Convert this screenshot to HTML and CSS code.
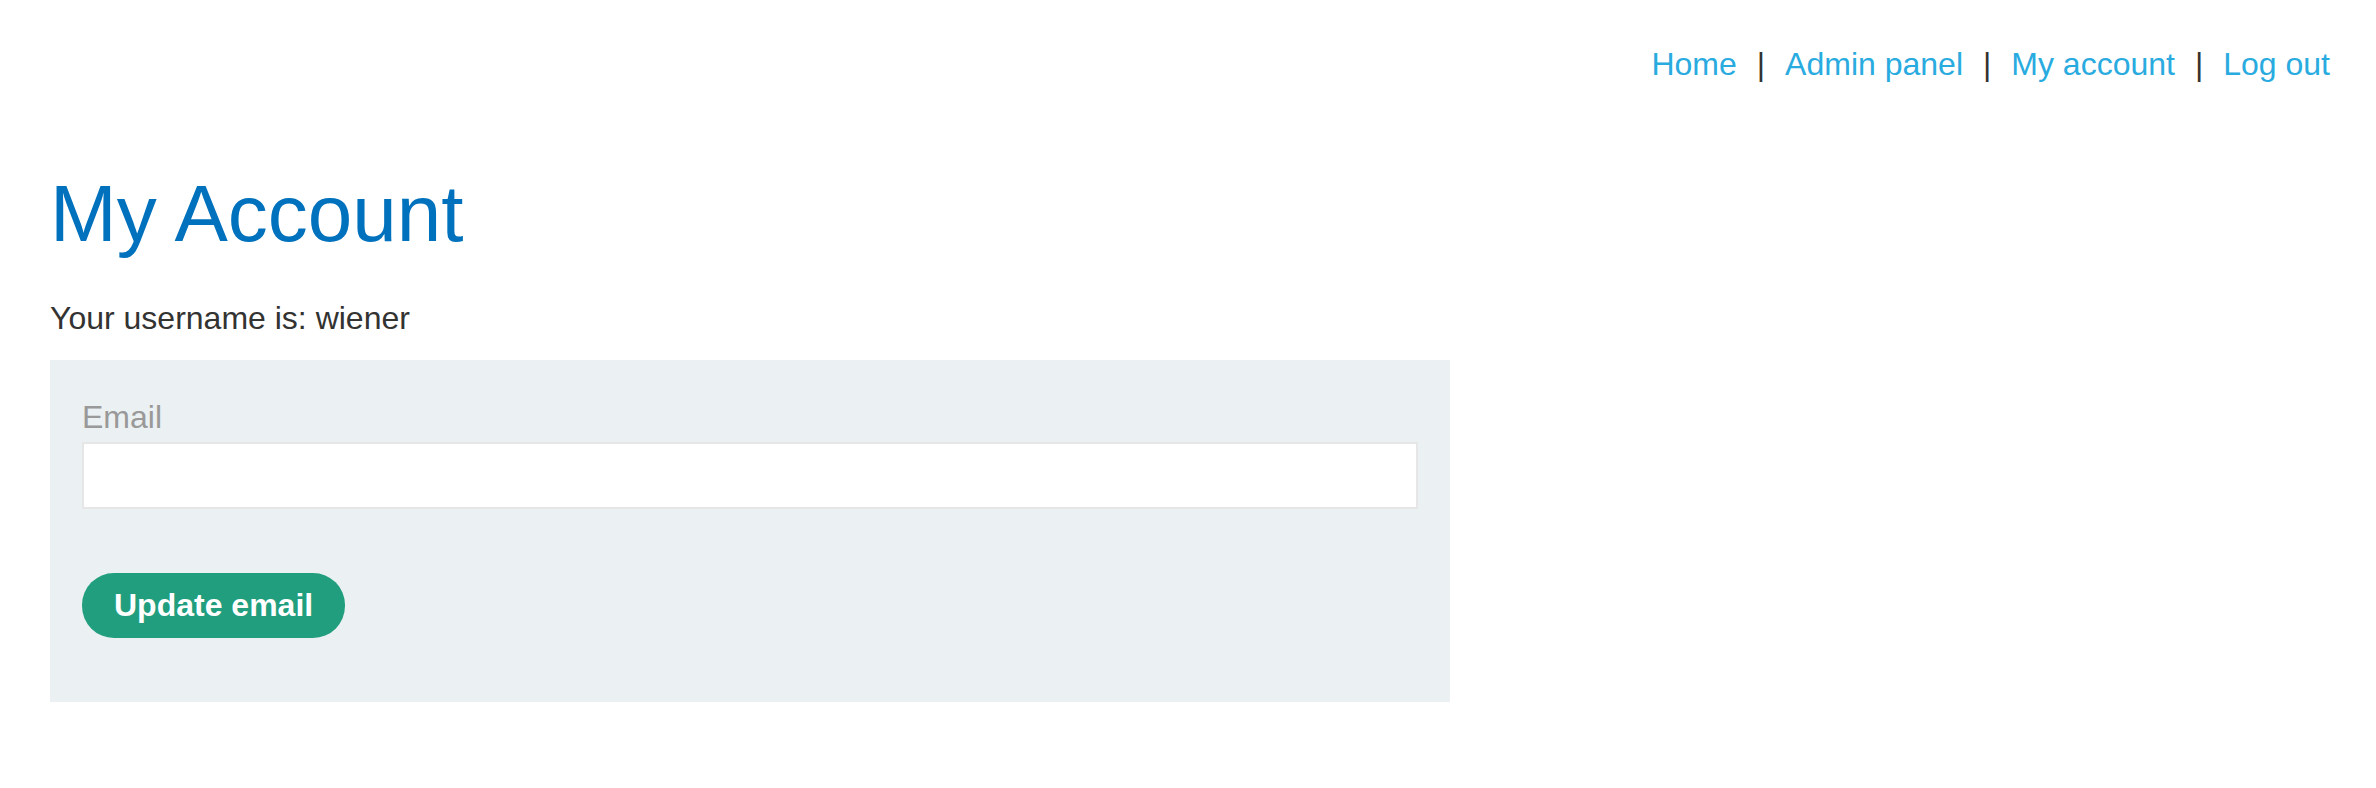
FILE: index.html
```html
<!DOCTYPE html>
<html lang="en">
<head>
    <meta charset="UTF-8">
    <title>My Account</title>
    <link rel="stylesheet" href="styles.css">
</head>
<body>
<header class="top-links">
    <a href="/">Home</a>
    <span class="sep">|</span>
    <a href="/admin">Admin panel</a>
    <span class="sep">|</span>
    <a href="/my-account">My account</a>
    <span class="sep">|</span>
    <a href="/logout">Log out</a>
</header>

<main class="account">
    <h1>My Account</h1>
    <p class="username">Your username is: wiener</p>

    <!-- Change email form -->
    <form class="login-form" id="changeEmailForm" method="POST" action="/my-account/change-email">
        <label for="email">Email</label>
        <input type="email" id="email" name="email" required/>
        <button type="submit" class="button">Update email</button>
    </form>
</main>
</body>
</html>
```

FILE: styles.css
```css
body {
    margin: 0;
    font-family: "Liberation Sans", Arial, sans-serif;
    font-size: 32px;
    color: #333332;
    background-color: #fff;
}

a {
    color: #29abe0;
    text-decoration: none;
}

.top-links {
    display: flex;
    justify-content: flex-end;
    align-items: center;
    gap: 20px;
    padding: 40px 46px 0 0;
    line-height: 48px;
}

.top-links .sep {
    color: #333332;
}

.account {
    padding: 0 50px;
}

h1 {
    margin: 80px 0 0;
    font-size: 80px;
    font-weight: normal;
    line-height: 92px;
    color: #0071bc;
}

.username {
    margin: 40px 0 23px;
    line-height: 37px;
}

.login-form {
    display: flex;
    flex-direction: column;
    align-items: flex-start;
    width: 1400px;
    box-sizing: border-box;
    padding: 37px 32px 64px;
    background-color: #ebf0f2;
}

.login-form label {
    color: #999;
    line-height: 40px;
}

.login-form input {
    width: 100%;
    height: 67px;
    margin: 5px 0 64px;
    box-sizing: border-box;
    border: 2px solid #e6e6e6;
    background-color: #fff;
    font-family: inherit;
    font-size: 32px;
}

.button {
    height: 65px;
    padding: 0 32px;
    border: none;
    border-radius: 32px;
    background-color: #209e7e;
    color: #fff;
    font-family: inherit;
    font-size: 32px;
    font-weight: bold;
    cursor: pointer;
}
```
